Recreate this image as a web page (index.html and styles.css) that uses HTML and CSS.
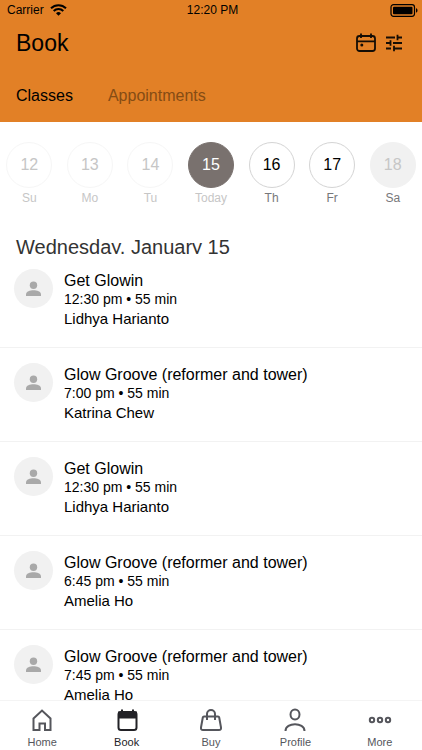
FILE: index.html
```html
<!DOCTYPE html>
<html lang="en">
<head>
  <meta charset="UTF-8">
  <meta name="viewport" content="width=device-width, initial-scale=1">
  <title>Book</title>
  <link rel="stylesheet" href="styles.css">
</head>
<body>

<!-- Shared avatar icon -->
<svg class="symbols" aria-hidden="true">
  <symbol id="person" viewBox="0 0 16 16">
    <circle cx="7.500" cy="4.200" r="3.700"/>
    <path d="M0 15v-1.500C0 10.500 4 9.300 7.500 9.300s7.500 1.200 7.500 4.200V15z"/>
  </symbol>
</svg>

<header class="header">
  <div class="status">
    <div class="carrier">
      <span>Carrier</span>
      <svg width="17" height="12" viewBox="0 0 17 12" fill="none" stroke="#000" stroke-width="2">
        <path d="M1 4.300a10.600 10.600 0 0 1 15 0"/>
        <path d="M3.700 7a6.800 6.800 0 0 1 9.600 0"/>
        <path d="M8.500 11.800 6 9.300a3.500 3.500 0 0 1 5 0z" fill="#000" stroke="none"/>
      </svg>
    </div>
    <span>12:20 PM</span>
    <svg class="battery" width="28" height="13" viewBox="0 0 28 13">
      <rect x="1" y=".7" width="23.500" height="11.600" rx="2.500" fill="none" stroke="#000" stroke-width="1.200"/>
      <rect x="3" y="2.700" width="19.500" height="7.600" rx="1" fill="#000"/>
      <path d="M26 4.300c2 .6 2 3.800 0 4.400z" fill="#000"/>
    </svg>
  </div>
  <div class="title-bar">
    <h1>Book</h1>
    <div class="actions">
      <button type="button" aria-label="Calendar">
        <svg width="20" height="20" viewBox="0 0 20 20" fill="none" stroke="#150d05" stroke-width="1.800">
          <rect x="1" y="3" width="18" height="15" rx="2.500"/>
          <path d="M1 8.300h18M5 .5v4.500M15 .5v4.500"/>
          <circle cx="5.800" cy="12" r="1.500" fill="#150d05" stroke="none"/>
        </svg>
      </button>
      <button type="button" aria-label="Filters">
        <svg width="18" height="18" viewBox="0 0 18 18" fill="none" stroke="#150d05" stroke-width="1.800">
          <path d="M1 3.500h9M12.500 3.500H17M12.500 .8v5.400M1 9h4.500M5.500 6.300v5.400M8 9h9M1 14.500h5M9 14.500h8M9 11.800v5.400"/>
        </svg>
      </button>
    </div>
  </div>
  <nav class="sections">
    <a href="#classes" class="current">Classes</a>
    <a href="#appointments">Appointments</a>
  </nav>
</header>

<div class="days">
  <button type="button" class="day past"><span class="num">12</span><span>Su</span></button>
  <button type="button" class="day past"><span class="num">13</span><span>Mo</span></button>
  <button type="button" class="day past"><span class="num">14</span><span>Tu</span></button>
  <button type="button" class="day today"><span class="num">15</span><span>Today</span></button>
  <button type="button" class="day"><span class="num">16</span><span>Th</span></button>
  <button type="button" class="day"><span class="num">17</span><span>Fr</span></button>
  <button type="button" class="day closed"><span class="num">18</span><span>Sa</span></button>
</div>

<main class="schedule" id="classes">
  <h2>Wednesday, January 15</h2>
  <ul class="classes">
    <li>
      <span class="avatar"><svg width="16" height="16"><use href="#person"/></svg></span>
      <div>
        <h3>Get Glowin</h3>
        <p class="time">12:30 pm • 55 min</p>
        <p>Lidhya Harianto</p>
      </div>
    </li>
    <li>
      <span class="avatar"><svg width="16" height="16"><use href="#person"/></svg></span>
      <div>
        <h3>Glow Groove (reformer and tower)</h3>
        <p class="time">7:00 pm • 55 min</p>
        <p>Katrina Chew</p>
      </div>
    </li>
    <li>
      <span class="avatar"><svg width="16" height="16"><use href="#person"/></svg></span>
      <div>
        <h3>Get Glowin</h3>
        <p class="time">12:30 pm • 55 min</p>
        <p>Lidhya Harianto</p>
      </div>
    </li>
    <li>
      <span class="avatar"><svg width="16" height="16"><use href="#person"/></svg></span>
      <div>
        <h3>Glow Groove (reformer and tower)</h3>
        <p class="time">6:45 pm • 55 min</p>
        <p>Amelia Ho</p>
      </div>
    </li>
    <li>
      <span class="avatar"><svg width="16" height="16"><use href="#person"/></svg></span>
      <div>
        <h3>Glow Groove (reformer and tower)</h3>
        <p class="time">7:45 pm • 55 min</p>
        <p>Amelia Ho</p>
      </div>
    </li>
  </ul>
</main>

<nav class="tabs">
  <a href="#home">
    <svg width="24" height="24" viewBox="0 0 24 24">
      <path d="M3.500 10.500 12 2.500l8.500 8V22H15v-6.500H9.500V22h-6z"/>
    </svg>
    Home
  </a>
  <a href="#book" class="current">
    <svg width="24" height="24" viewBox="0 0 24 24">
      <rect x="3.500" y="4" width="18" height="18" rx="2.500"/>
      <path d="M4 4.500h17v5H4zM7 1.500v3M18 1.500v3" fill="#222227"/>
    </svg>
    Book
  </a>
  <a href="#buy">
    <svg width="24" height="24" viewBox="0 0 24 24">
      <path d="M5 8.500h14q1 0 1.200 1L22 19.500q.3 2.500-2 2.500H4q-2.300 0-2-2.500l1.800-10q.2-1 1.200-1zM8 12V6a4 4 0 0 1 8 0v6"/>
    </svg>
    Buy
  </a>
  <a href="#profile">
    <svg width="24" height="24" viewBox="0 0 24 24">
      <ellipse cx="12" cy="6.500" rx="4.500" ry="5"/>
      <path d="M2.500 23c0-9 19-9 19 0"/>
    </svg>
    Profile
  </a>
  <a href="#more">
    <svg width="24" height="24" viewBox="0 0 24 24">
      <circle cx="4" cy="12" r="2.200"/>
      <circle cx="12" cy="12" r="2.200"/>
      <circle cx="20" cy="12" r="2.200"/>
    </svg>
    More
  </a>
</nav>

</body>
</html>
```
FILE: styles.css
```css
* {
  box-sizing: border-box;
}
body {
  margin: 0;
  height: 100vh;
  display: flex;
  flex-direction: column;
  overflow: hidden;
  background: #fff;
  color: #000;
  font-family: "Liberation Sans", Arial, sans-serif;
}
h1, h2, h3, p, ul {
  margin: 0;
  padding: 0;
  font-weight: normal;
}
button {
  padding: 0;
  border: none;
  background: none;
  font: inherit;
  cursor: pointer;
}
a {
  text-decoration: none;
}
svg {
  display: block;
}
.symbols {
  display: none;
}

/* Header */
.header {
  flex: none;
  background: #e28026;
}
.status {
  display: grid;
  grid-template-columns: 1fr auto 1fr;
  align-items: center;
  height: 20px;
  padding: 0 4px 0 7px;
  font-size: 12px;
}
.carrier {
  display: flex;
  align-items: center;
  gap: 6px;
}
.battery {
  justify-self: end;
}
.title-bar {
  display: flex;
  justify-content: space-between;
  align-items: center;
  height: 46px;
  padding: 0 19px 0 16px;
}
.title-bar h1 {
  font-size: 23px;
}
.actions {
  display: flex;
  align-items: center;
  gap: 9px;
}
.sections {
  display: flex;
  gap: 35px;
  padding: 20px 16px 16px;
  line-height: 20px;
}
.sections a {
  color: #854c14;
}
.sections .current {
  color: #000;
}

/* Day picker */
.days {
  flex: none;
  display: flex;
  margin: 0 -1px;
  padding-top: 20px;
}
.day {
  flex: 1;
  display: flex;
  flex-direction: column;
  align-items: center;
  gap: 2px;
  color: #77777a;
  font-size: 12px;
  line-height: 16px;
}
.num {
  display: grid;
  place-items: center;
  width: 46px;
  height: 46px;
  border: 1px solid #d4d4d4;
  border-radius: 50%;
  color: #000;
  font-size: 16px;
}
.past, .today {
  color: #c6c6c6;
}
.past .num {
  border-color: #f6f6f6;
  color: #c6c6c6;
}
.today .num {
  border-color: #79716e;
  background: #79716e;
  color: #fff;
}
.closed .num {
  border-color: #f1f1f1;
  background: #f1f1f1;
  color: #c6c6c6;
}

/* Class list */
.schedule {
  flex: 1;
  min-height: 0;
  padding-top: 30px;
  overflow: hidden;
}
.schedule h2 {
  height: 18px;
  padding-left: 16px;
  overflow: hidden;
  color: #333;
  font-size: 20px;
  line-height: 22px;
}
.classes {
  list-style: none;
}
.classes li {
  display: flex;
  gap: 11px;
  padding: 15px 14px 19px;
  border-bottom: 1px solid #f2f2f2;
}
.classes li > div {
  padding-top: 2px;
  font-size: 15px;
  line-height: 19px;
}
.classes h3 {
  font-size: 16px;
}
.classes .time {
  font-size: 14px;
}
.avatar {
  display: grid;
  place-items: center;
  width: 39px;
  height: 39px;
  border-radius: 50%;
  background: #f1f1f1;
  fill: #a9a9a9;
}

/* Bottom tabs */
.tabs {
  flex: none;
  display: flex;
  border-top: 1px solid #f4f4f4;
  background: #fff;
}
.tabs a {
  flex: 1;
  display: flex;
  flex-direction: column;
  align-items: center;
  gap: 4px;
  padding: 7px 0 1px;
  color: #55565c;
  font-size: 11px;
  line-height: 13px;
}
.tabs svg {
  fill: none;
  stroke: #55565c;
  stroke-width: 2;
}
.tabs .current {
  color: #222227;
}
.tabs .current svg {
  stroke: #222227;
}
```
